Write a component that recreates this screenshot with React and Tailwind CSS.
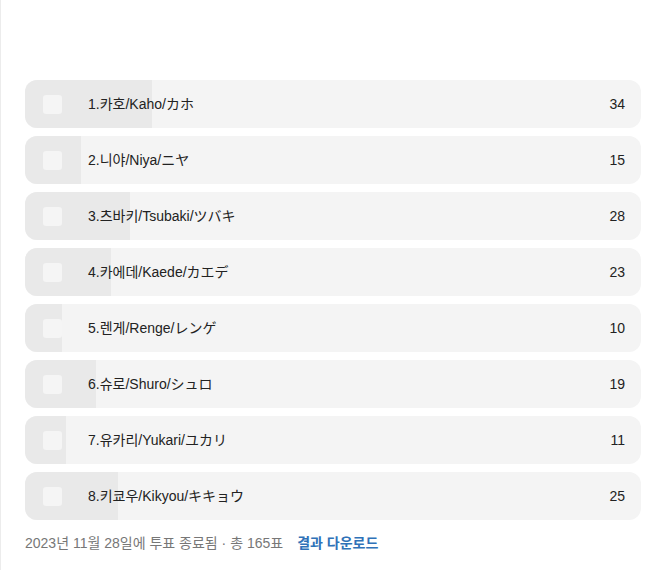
const options = [
  { label: '1.카호/Kaho/カホ', votes: 34 },
  { label: '2.니야/Niya/ニヤ', votes: 15 },
  { label: '3.츠바키/Tsubaki/ツバキ', votes: 28 },
  { label: '4.카에데/Kaede/カエデ', votes: 23 },
  { label: '5.렌게/Renge/レンゲ', votes: 10 },
  { label: '6.슈로/Shuro/シュロ', votes: 19 },
  { label: '7.유카리/Yukari/ユカリ', votes: 11 },
  { label: '8.키쿄우/Kikyou/キキョウ', votes: 25 },
]

const total = 165

export default function App() {
  return (
    <div
      className="min-h-[570px] w-[654px] border-l border-[#ececec] bg-white pl-6 pr-[13px] pt-20"
      style={{ fontFamily: '"Liberation Sans", "Noto Sans CJK KR", sans-serif' }}
    >
      <div className="flex flex-col gap-2">
        {options.map((opt) => (
          <div
            key={opt.label}
            className="relative flex h-12 items-center overflow-hidden rounded-xl bg-[#f4f4f4]"
          >
            <div
              className="absolute inset-y-0 left-0 bg-[#e9e9e9]"
              style={{ width: `${(opt.votes / total) * 100}%` }}
            />
            <div className="relative ml-[18px] h-[19px] w-[19px] rounded-[3px] bg-[#f5f5f5]" />
            <span className="relative ml-[26px] text-[14px] text-[#222]">{opt.label}</span>
            <span className="relative ml-auto mr-4 text-[14px] text-[#222]">{opt.votes}</span>
          </div>
        ))}
      </div>
      <div className="mt-[13px] flex items-center text-[14px] leading-5">
        <span className="text-[#777]">2023년 11월 28일에 투표 종료됨 · 총 165표</span>
        <span className="ml-[14px] font-bold text-[#2f72b8]">결과 다운로드</span>
      </div>
    </div>
  )
}
